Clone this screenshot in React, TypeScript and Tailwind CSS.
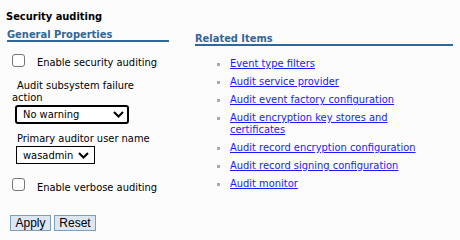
import React from "react";

const font = "font-['DejaVu_Sans_Condensed','DejaVu_Sans',sans-serif]";

function Checkbox() {
  return (
    <span className="inline-block w-[13px] h-[13px] rounded-[3px] border border-[#767676] bg-white shrink-0" />
  );
}

function Chevron() {
  return (
    <svg width="11" height="7" viewBox="0 0 11 7" className="shrink-0">
      <path d="M1 1 L5.5 5.5 L10 1" fill="none" stroke="#000" strokeWidth="2" />
    </svg>
  );
}

const links = [
  "Event type filters",
  "Audit service provider",
  "Audit event factory configuration",
  "Audit encryption key stores and certificates",
  "Audit record encryption configuration",
  "Audit record signing configuration",
  "Audit monitor",
];

export default function App() {
  return (
    <div className={`w-[460px] h-[240px] bg-[#fcfcfc] text-[11px] text-black ${font}`}>
      <div className="pt-[10px] pl-[6px] font-bold leading-[13px]">Security auditing</div>
      <div className="flex pl-[7px] gap-[26px]">
        <div className="w-[162px]">
          <div className="mt-[6px] font-bold text-[#336699] leading-[11px] border-b-2 border-[#336699]">
            General Properties
          </div>
          <div className="flex items-start mt-[12px] pl-[5px]">
            <Checkbox />
            <span className="ml-[12px] mt-[2px] leading-[13px]">Enable security auditing</span>
          </div>
          <div className="mt-[11px] pl-[5px] pr-[20px] indent-[5px] leading-[12px]">
            Audit subsystem failure action
          </div>
          <div className="ml-[8px] mt-[1px] w-[114px] h-[19px] border-2 border-black rounded-[3px] bg-white flex items-center justify-between pl-[6px] pr-[3px]">
            <span className="leading-[13px]">No warning</span>
            <Chevron />
          </div>
          <div className="mt-[9px] pl-[10px] leading-[12px]">Primary auditor user name</div>
          <div className="ml-[9px] mt-[1px] w-[79px] h-[18px] border border-black bg-white flex items-center justify-between pl-[6px] pr-[5px]">
            <span className="leading-[13px]">wasadmin</span>
            <Chevron />
          </div>
          <div className="flex items-start mt-[14px] pl-[5px]">
            <Checkbox />
            <span className="ml-[12px] mt-[3px] leading-[13px]">Enable verbose auditing</span>
          </div>
          <div className="flex gap-[3px] mt-[21px] ml-[3px] font-['Liberation_Sans',sans-serif] text-[12px]">
            <button className="w-[41px] h-[16px] border border-[#7f9db9] bg-[#dde6f3] leading-[14px]">Apply</button>
            <button className="w-[42px] h-[16px] border border-[#7f9db9] bg-[#dde6f3] leading-[14px]">Reset</button>
          </div>
        </div>
        <div className="w-[258px]">
          <div className="mt-[10px] font-bold text-[#336699] leading-[11px] border-b-2 border-[#336699]">
            Related Items
          </div>
          <ul className="mt-[12px] pl-[22px] flex flex-col gap-[6px]">
            {links.map((l) => (
              <li key={l} className="flex items-start">
                <span className="w-[3px] h-[3px] bg-[#aaaaaa] mt-[5px] shrink-0" />
                <a href="#" className="ml-[10px] w-[190px] text-[#1a1aff] underline leading-[12px]">
                  {l}
                </a>
              </li>
            ))}
          </ul>
        </div>
      </div>
    </div>
  );
}
